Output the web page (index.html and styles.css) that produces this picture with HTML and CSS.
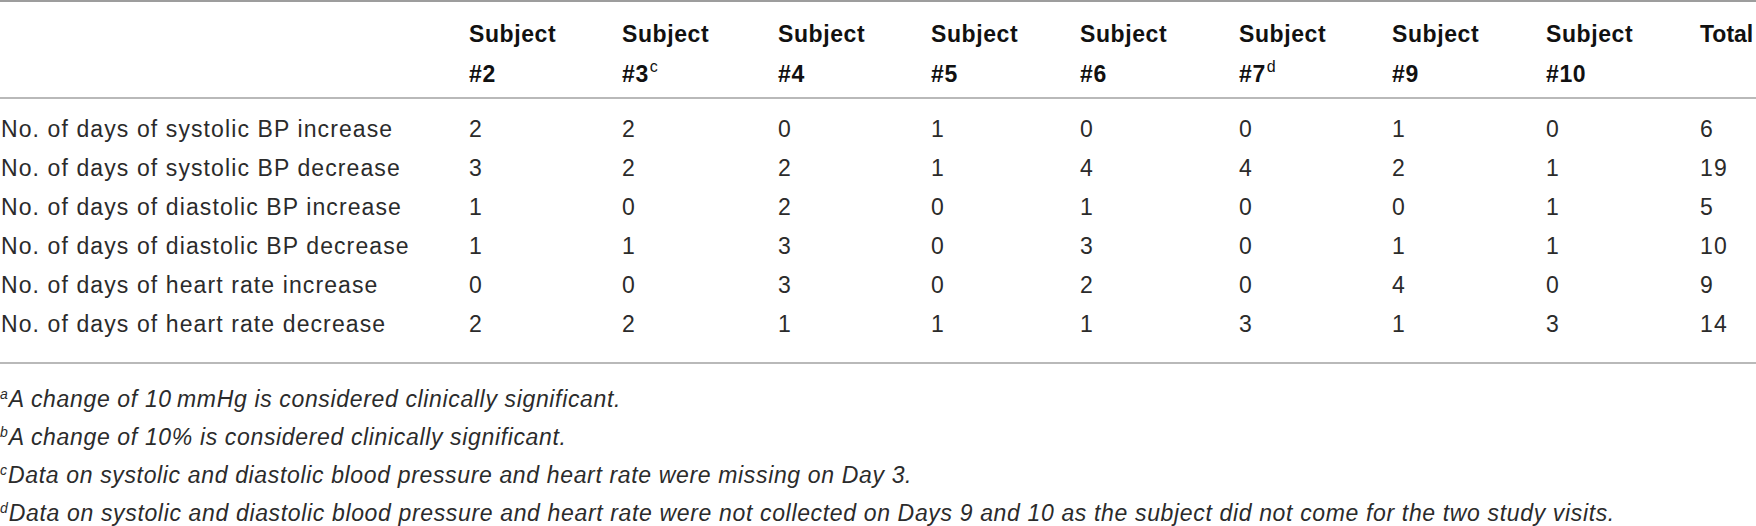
FILE: index.html
```html
<!DOCTYPE html>
<html lang="en">
<head>
<meta charset="utf-8">
<title>Table</title>
<link rel="stylesheet" href="styles.css">
</head>
<body>
<div class="wrap">
  <table class="tbl">
    <colgroup>
      <col class="c-label">
      <col class="c-153">
      <col class="c-156">
      <col class="c-153">
      <col class="c-149">
      <col class="c-159">
      <col class="c-153">
      <col class="c-154">
      <col class="c-154">
      <col class="c-total">
    </colgroup>
    <thead>
      <tr>
        <th></th>
        <th>Subject<br>#2</th>
        <th>Subject<br>#3<span class="hsup">c</span></th>
        <th>Subject<br>#4</th>
        <th>Subject<br>#5</th>
        <th>Subject<br>#6</th>
        <th>Subject<br>#7<span class="hsup">d</span></th>
        <th>Subject<br>#9</th>
        <th>Subject<br>#10</th>
        <th class="total">Total</th>
      </tr>
    </thead>
    <tbody>
      <tr><td class="label">No. of days of systolic BP increase</td><td>2</td><td>2</td><td>0</td><td>1</td><td>0</td><td>0</td><td>1</td><td>0</td><td>6</td></tr>
      <tr><td class="label">No. of days of systolic BP decrease</td><td>3</td><td>2</td><td>2</td><td>1</td><td>4</td><td>4</td><td>2</td><td>1</td><td>19</td></tr>
      <tr><td class="label">No. of days of diastolic BP increase</td><td>1</td><td>0</td><td>2</td><td>0</td><td>1</td><td>0</td><td>0</td><td>1</td><td>5</td></tr>
      <tr><td class="label">No. of days of diastolic BP decrease</td><td>1</td><td>1</td><td>3</td><td>0</td><td>3</td><td>0</td><td>1</td><td>1</td><td>10</td></tr>
      <tr><td class="label">No. of days of heart rate increase</td><td>0</td><td>0</td><td>3</td><td>0</td><td>2</td><td>0</td><td>4</td><td>0</td><td>9</td></tr>
      <tr><td class="label">No. of days of heart rate decrease</td><td>2</td><td>2</td><td>1</td><td>1</td><td>1</td><td>3</td><td>1</td><td>3</td><td>14</td></tr>
    </tbody>
  </table>
  <div class="notes">
    <p class="note"><span class="fsup">a</span>A change of 10&#8201;mmHg is considered clinically significant.</p>
    <p class="note"><span class="fsup">b</span>A change of 10% is considered clinically significant.</p>
    <p class="note"><span class="fsup">c</span>Data on systolic and diastolic blood pressure and heart rate were missing on Day 3.</p>
    <p class="note"><span class="fsup">d</span>Data on systolic and diastolic blood pressure and heart rate were not collected on Days 9 and 10 as the subject did not come for the two study visits.</p>
  </div>
</div>
</body>
</html>
```
FILE: styles.css
```css
html, body {
  margin: 0;
  padding: 0;
  background: #ffffff;
  overflow: hidden;
}

body {
  font-family: "Liberation Sans", Arial, sans-serif;
  color: #2b2b2b;
  font-size: 23px;
}

.wrap {
  width: 1756px;
  border-top: 2px solid #9d9d9d;
}

.tbl {
  width: 1756px;
  table-layout: fixed;
  border-collapse: separate;
  border-spacing: 0;
}

.c-label { width: 469px; }
.c-153 { width: 153px; }
.c-156 { width: 156px; }
.c-149 { width: 149px; }
.c-159 { width: 159px; }
.c-154 { width: 154px; }
.c-total { width: 56px; }

.tbl th {
  text-align: left;
  vertical-align: top;
  font-weight: bold;
  line-height: 40px;
  letter-spacing: 0.6px;
  padding: 12px 0 3px 0;
  border-bottom: 2px solid #b9b9b9;
  color: #111111;
  white-space: nowrap;
}

.tbl th.total {
  letter-spacing: 0;
}

.hsup {
  font-size: 16px;
  font-weight: normal;
  line-height: 0;
  vertical-align: 10px;
  letter-spacing: 0;
  margin-left: 1px;
}

.tbl td {
  padding: 0;
  line-height: 39px;
  letter-spacing: 1.1px;
  white-space: nowrap;
}

.tbl td.label {
  padding-left: 1px;
}

.tbl tbody tr:first-child td {
  padding-top: 11px;
}

.tbl tbody tr:last-child td {
  padding-bottom: 18px;
  border-bottom: 2px solid #b9b9b9;
}

.notes {
  padding-top: 16px;
}

.note {
  margin: 0;
  font-style: italic;
  line-height: 38px;
  letter-spacing: 0.65px;
  white-space: nowrap;
}

.fsup {
  font-size: 14px;
  line-height: 0;
  vertical-align: 8px;
  margin-right: 1px;
  letter-spacing: 0;
}
```
